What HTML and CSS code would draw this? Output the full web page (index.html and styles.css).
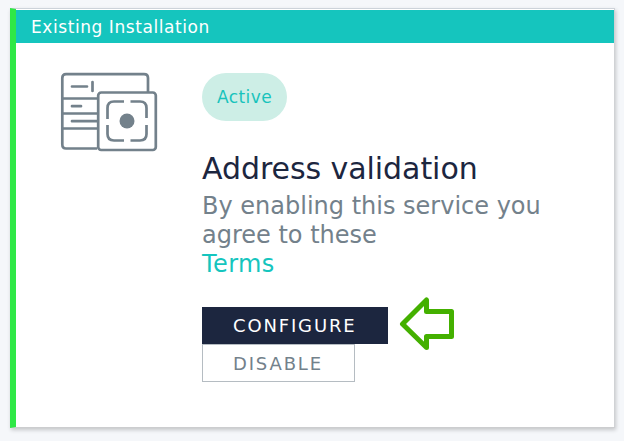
FILE: index.html
```html
<!DOCTYPE html>
<html lang="en">
<head>
<meta charset="utf-8">
<title>Address validation</title>
<link rel="stylesheet" href="styles.css">
</head>
<body>
<article class="card">
  <header class="card-header"><span>Existing Installation</span></header>
  <div class="card-body">
    <svg class="service-icon" width="98" height="80" viewBox="0 0 98 80" fill="none" stroke="#73818b" stroke-width="2.700">
      <path d="M37 76.500H6Q2.300 76.500 2.300 72.500V6Q2.300 2.200 6 2.200H84Q88 2.200 88 6V20M2 26.500H37M2 41.500H37M2 56.500H37"/>
      <path stroke-linecap="round" d="M12 14.500H27M32.500 10V19M12 34.200H21M12 49.200H37"/>
      <rect x="38.200" y="20.500" width="57.600" height="57.500" rx="3"/>
      <path d="M47.500 47V36Q47.500 29.500 54 29.500H64M70.500 29.500H80Q86.500 29.500 86.500 36V46M86.500 53V62Q86.500 68.500 80 68.500H70.500M64 68.500H54Q47.500 68.500 47.500 62V53"/>
      <circle cx="67" cy="49" r="7.500" fill="#73818b" stroke="none"/>
    </svg>
    <div class="details">
      <span class="badge">Active</span>
      <h1 class="title">Address validation</h1>
      <p class="description">By enabling this service you agree to these<br><a class="terms">Terms</a></p>
      <div class="actions">
        <div class="primary-row">
          <button class="button configure">CONFIGURE</button>
          <svg class="arrow" width="56" height="56" viewBox="0 0 56 56" fill="none" stroke="#44b000" stroke-width="5" stroke-linejoin="round">
            <path d="M3.500 28L27.500 4V15.500H52.500V40.500H27.500V51.500Z"/>
          </svg>
        </div>
        <button class="button disable">DISABLE</button>
      </div>
    </div>
  </div>
</article>
</body>
</html>
```
FILE: styles.css
```css
* { box-sizing: border-box; }
body {
  margin: 0;
  padding: 8px 10px;
  background: #f5f7fa;
  font-family: Verdana, "DejaVu Sans", sans-serif;
}
.card {
  width: 605px;
  height: 420px;
  padding-top: 1px;
  border: 1px solid #cdd3da;
  border-left: 6px solid #2fe846;
  border-right-color: #d0d2d5;
  border-bottom-color: #cccdcf;
  background: #fff;
  box-shadow: 1px 2px 4px rgba(0, 0, 0, .2);
}
.card-header {
  height: 33px;
  padding-left: 15px;
  background: #15c5be;
  color: #fff;
  font-size: 17px;
  line-height: 34px;
  letter-spacing: .57px;
}
.card-body {
  display: flex;
  padding: 29px 0 0 44px;
}
.service-icon { flex: none; }
.details {
  width: 380px;
  margin-left: 44px;
  padding-top: 1px;
}
.badge {
  display: block;
  width: 85px;
  height: 48px;
  border-radius: 24px;
  background: #cdeee6;
  color: #18c3bc;
  font-size: 17px;
  line-height: 48px;
  letter-spacing: .4px;
  text-align: center;
}
.title {
  margin: 30px 0 0;
  color: #1c263f;
  font-size: 30px;
  font-weight: 400;
  letter-spacing: -.06px;
  line-height: 36px;
  white-space: nowrap;
}
.description {
  margin: 5px 0 0;
  color: #73818b;
  font-size: 24px;
  line-height: 29px;
}
.terms {
  color: #15c5be;
  letter-spacing: .4px;
}
.actions { margin-top: 28px; }
.primary-row {
  display: flex;
  align-items: center;
  height: 37px;
}
.arrow {
  flex: none;
  margin: -8px 0 -5px 11px;
}
.button {
  display: block;
  padding: 0 0 0 31px;
  border: 0;
  font-family: inherit;
  font-size: 18px;
  letter-spacing: 1.85px;
  text-align: left;
}
.configure {
  width: 186px;
  height: 37px;
  background: #1c263f;
  color: #fff;
}
.disable {
  width: 153px;
  height: 38px;
  padding-left: 30px;
  border: 1px solid #b5bcc2;
  background: #fff;
  color: #73818b;
}
```
